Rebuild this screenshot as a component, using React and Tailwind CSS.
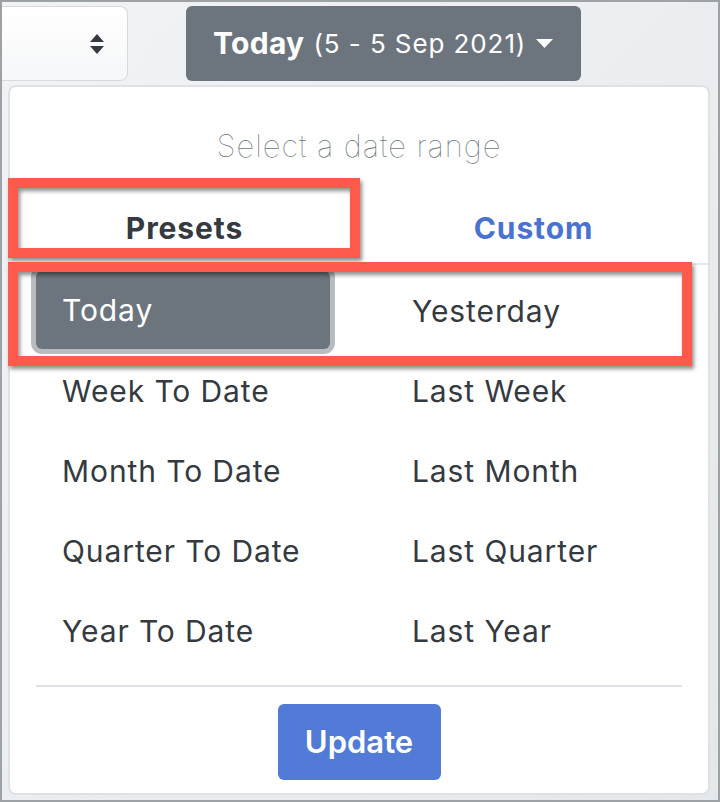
import React from 'react';

const leftPresets = ['Week To Date', 'Month To Date', 'Quarter To Date', 'Year To Date'];
const rightPresets = ['Last Week', 'Last Month', 'Last Quarter', 'Last Year'];

function SortIcon() {
  return (
    <svg width="16" height="22" viewBox="0 0 16 22" className="text-[#343a40]">
      <path d="M8 1 L15 9 H1 Z" fill="currentColor" />
      <path d="M8 21 L15 13 H1 Z" fill="currentColor" />
    </svg>
  );
}

function Caret() {
  return (
    <svg width="17" height="9" viewBox="0 0 17 9" className="ml-[10px] text-white">
      <path d="M0 0 H17 L8.5 9 Z" fill="currentColor" />
    </svg>
  );
}

export default function App() {
  return (
    <div
      className="relative h-[802px] w-[720px] overflow-hidden border-2 border-[#9da2a7] bg-gradient-to-br from-[#f1f3f5] to-[#e5e8eb]"
      style={{ fontFamily: 'Inter, "Noto Sans", sans-serif' }}
    >
      {/* top controls */}
      <div className="mt-[4px] flex h-[75px] items-stretch">
        <div className="flex w-[126px] items-center justify-end rounded-r-lg border border-l-0 border-[#d6dadf] bg-gradient-to-b from-white to-[#f6f7f8] pr-[22px]">
          <SortIcon />
        </div>
        <button className="ml-[58px] flex w-[395px] items-center rounded-md bg-[#6c757d] pl-[27px] text-white">
          <span className="text-[30px] font-bold tracking-[0.01em]">Today</span>
          <span className="ml-[9px] text-[26px] tracking-[0.035em]">(5 - 5 Sep 2021)</span>
          <Caret />
        </button>
      </div>

      {/* dropdown panel */}
      <div className="ml-[6px] mt-[4px] flex h-[710px] w-[702px] flex-col rounded-lg border-2 border-[#dee2e6] bg-white">
        <div className="pt-[41px] text-center text-[31px] font-thin leading-[36px] tracking-[0.03em] text-[#6c757d]">
          Select a date range
        </div>

        <div className="mt-[22px] flex h-[79px] border-b-2 border-[#e3e6ea]">
          <div className="flex flex-1 items-center justify-center pt-[8px] text-[30px] font-bold tracking-[0.03em] text-[#343a40]">Presets</div>
          <div className="flex flex-1 items-center justify-center pt-[8px] text-[30px] font-bold tracking-[0.03em] text-[#4a72d1]">Custom</div>
        </div>

        <div className="flex px-[26px] pt-[5px] text-[30px] tracking-[0.03em]">
          <div className="flex w-[376px] flex-col">
            <div className="flex h-[80px] items-center">
              <div className="flex h-[78px] w-[294px] items-center rounded-md bg-[#6c757d] pl-[26px] pt-[1px] text-white shadow-[0_0_0_5px_#b8bcc1]">
                Today
              </div>
            </div>
            {leftPresets.map((p) => (
              <div key={p} className="flex h-[80px] items-center pl-[26px] pt-[3px] text-[#343a40]">
                {p}
              </div>
            ))}
          </div>
          <div className="flex flex-1 flex-col">
            {['Yesterday', ...rightPresets].map((p) => (
              <div key={p} className="flex h-[80px] items-center pt-[3px] text-[#343a40]">
                {p}
              </div>
            ))}
          </div>
        </div>

        <div className="mx-[26px] mt-[15px] h-[2px] bg-[#dee2e6]" />

        <div className="mt-[17px] flex justify-center">
          <button className="h-[76px] w-[163px] rounded-md bg-[#527bd7] text-[31px] font-semibold text-white">
            Update
          </button>
        </div>
      </div>

      {/* annotation boxes */}
      <div className="absolute left-[6px] top-[176px] h-[80px] w-[352px] border-[10px] border-[#fd5a4b] shadow-[2px_3px_4px_rgba(0,0,0,0.45),inset_2px_3px_4px_rgba(0,0,0,0.45)]" />
      <div className="absolute left-[6px] top-[260px] h-[104px] w-[684px] border-[10px] border-[#fd5a4b] shadow-[2px_3px_4px_rgba(0,0,0,0.45),inset_2px_3px_4px_rgba(0,0,0,0.45)]" />
    </div>
  );
}
